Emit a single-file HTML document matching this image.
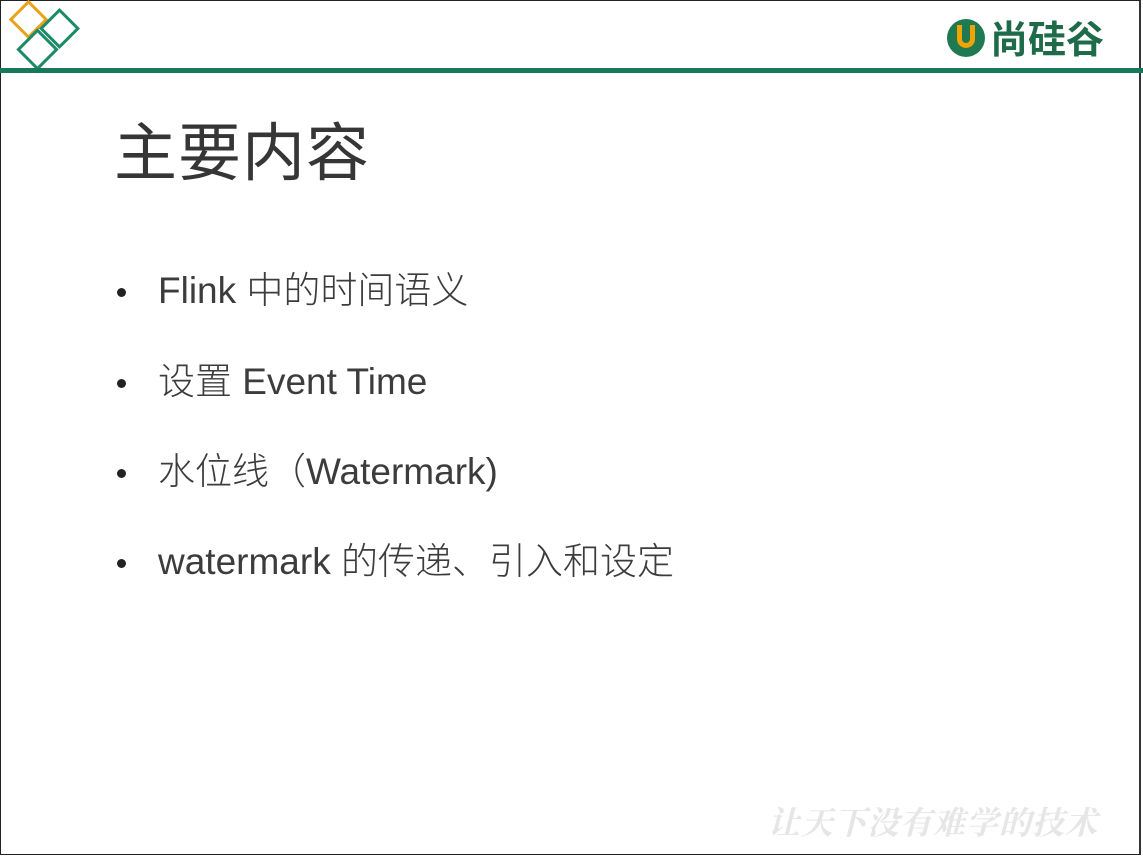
<!DOCTYPE html>
<html><head><meta charset="utf-8"><style>
body{margin:0;width:1143px;height:857px;background:#fff;position:relative;overflow:hidden;font-family:"Liberation Sans","Noto Sans CJK SC",sans-serif;color:#3a3a3a}
.frame{position:absolute;left:0;top:0;width:1141px;height:855px;border:1px solid #222;border-right:2px solid #333;box-sizing:border-box}
.bar{position:absolute;left:0;top:68px;width:1143px;height:5px;background:#17795a}
.t{position:absolute;left:114px;top:103px;font-size:63px;letter-spacing:1px;white-space:nowrap;font-family:"Noto Sans CJK SC",sans-serif;color:#363636}
.b{position:absolute;left:158px;font-size:37px;white-space:nowrap;font-family:"Liberation Sans","Noto Sans CJK SC",sans-serif;font-weight:300;line-height:40px;color:#3c3c3c}
.d{position:absolute;left:117px;width:9px;height:9px;border-radius:50%;background:#222}
.wm{position:absolute;left:768px;top:798px;font-size:32px;color:#e6e6e6;font-style:italic;font-weight:bold;letter-spacing:1px;font-family:"Noto Serif CJK SC",serif}
.logo{position:absolute;left:990px;top:15px;font-size:38px;color:#1d6b48;font-weight:bold;font-family:"Noto Sans CJK SC",sans-serif;letter-spacing:0px;line-height:44px}
</style></head><body>
<div class="frame"></div>
<svg style="position:absolute;left:0;top:0" width="100" height="72">
<rect x="16" y="7" width="25" height="25" fill="none" stroke="#e9a21b" stroke-width="3" transform="rotate(45 28.5 19.5)"/>
<rect x="46.5" y="15.5" width="26" height="26" fill="none" stroke="#1a8a67" stroke-width="3" transform="rotate(45 59.5 28.5)"/>
<rect x="24" y="36" width="27" height="27" fill="none" stroke="#1a8a67" stroke-width="3" transform="rotate(45 37.5 49.5)"/>
</svg>
<div class="bar"></div>
<svg style="position:absolute;left:945px;top:17px" width="42" height="42">
<circle cx="21" cy="21" r="19" fill="#1f7a52"/>
<path d="M12 8 V22 a9 9 0 0 0 18 0 V8 H25 V22 a4 4 0 0 1 -8 0 V8Z" fill="#f0a400"/>
</svg>
<div class="logo">尚硅谷</div>
<div class="t">主要内容</div>
<div class="d" style="top:288px"></div><div class="b" style="top:271px">Flink 中的时间语义</div>
<div class="d" style="top:379px"></div><div class="b" style="top:362px">设置 Event Time</div>
<div class="d" style="top:469px"></div><div class="b" style="top:452px">水位线（Watermark)</div>
<div class="d" style="top:559px"></div><div class="b" style="top:542px">watermark 的传递、引入和设定</div>
<div class="wm">让天下没有难学的技术</div>
</body></html>
